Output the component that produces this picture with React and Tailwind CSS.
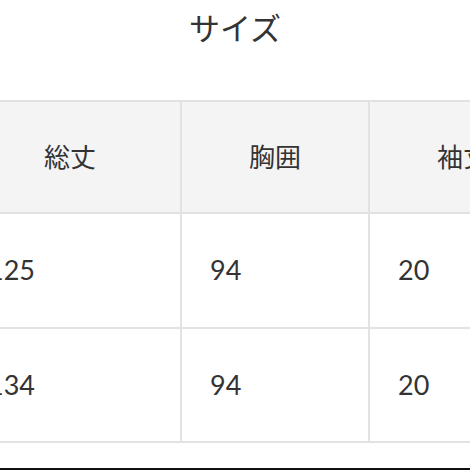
const header = ["総丈", "胸囲", "袖丈"];
const rows = [
  ["125", "94", "20"],
  ["134", "94", "20"],
];
const widths = ["w-[222px]", "w-[188px]", "w-[188px]"];

export default function App() {
  return (
    <div className="flex h-[470px] w-[470px] flex-col overflow-hidden bg-white text-[#333] [font-family:Lato,'Noto_Sans_CJK_JP',sans-serif]">
      <div className="flex h-[100px] justify-center pt-[6px]">
        <h1 className="text-[31px] leading-[44px] font-normal">サイズ</h1>
      </div>

      <div className="-ml-[40px] flex w-max flex-col border-t-2 border-[#e2e2e2]">
        <div className="flex h-[112px] bg-[#f4f4f4]">
          {header.map((h, i) => (
            <div
              key={h}
              className={`${widths[i]} flex shrink-0 items-center justify-center border-r-2 border-b-2 border-[#e2e2e2] text-[26px]`}
            >
              {h}
            </div>
          ))}
        </div>
        {rows.map((r, ri) => (
          <div key={ri} className={`flex ${ri === 0 ? "h-[115px]" : "h-[114px]"}`}>
            {r.map((v, i) => (
              <div
                key={i}
                className={`${widths[i]} flex shrink-0 items-center border-r-2 border-b-2 border-[#e2e2e2] pl-[28px] text-[27px]`}
              >
                {v}
              </div>
            ))}
          </div>
        ))}
      </div>

      <div className="flex-1" />
      <div className="h-[2px] bg-[#111]" />
    </div>
  );
}
